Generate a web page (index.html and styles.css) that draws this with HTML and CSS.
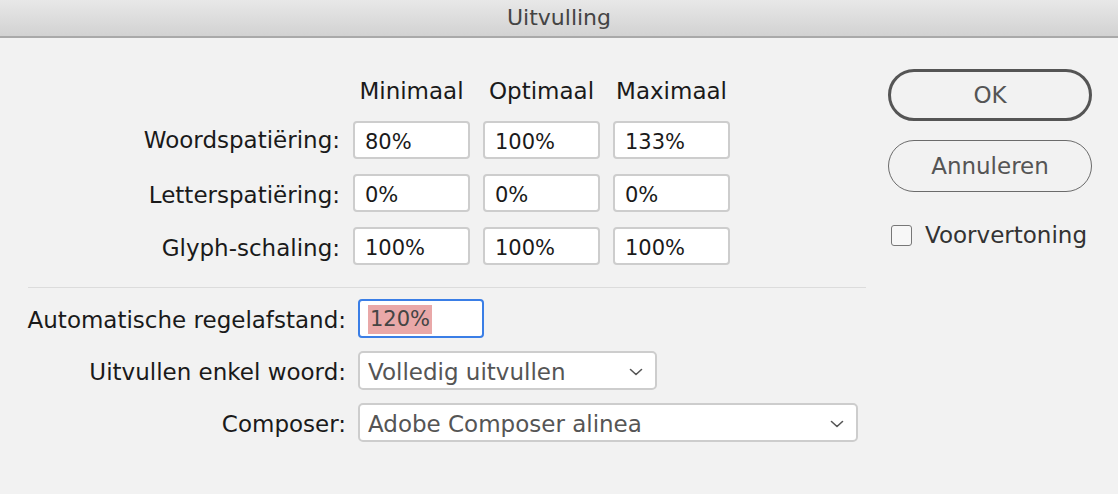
FILE: index.html
```html
<!DOCTYPE html>
<html lang="nl">
<head>
    <meta charset="UTF-8">
    <title>Uitvulling</title>
    <link rel="stylesheet" href="styles.css">
</head>
<body>
    <div class="titlebar">Uitvulling</div>

    <div class="window">
        <div class="form">
            <div class="spacing">
                <span></span>
                <span class="head">Minimaal</span>
                <span class="head">Optimaal</span>
                <span class="head">Maximaal</span>

                <label>Woordspatiëring:</label>
                <div class="field">80%</div>
                <div class="field">100%</div>
                <div class="field">133%</div>

                <label>Letterspatiëring:</label>
                <div class="field">0%</div>
                <div class="field">0%</div>
                <div class="field">0%</div>

                <label>Glyph-schaling:</label>
                <div class="field">100%</div>
                <div class="field">100%</div>
                <div class="field">100%</div>
            </div>

            <hr class="sep">

            <div class="options">
                <label>Automatische regelafstand:</label>
                <div class="field focus"><span class="selected">120%</span></div>

                <label>Uitvullen enkel woord:</label>
                <div class="select single">
                    <span>Volledig uitvullen</span>
                    <svg width="14" height="8" viewBox="0 0 14 8"><path d="M1.5 1.5 L7 6.5 L12.5 1.5" fill="none" stroke="#555" stroke-width="1.6" stroke-linecap="round" stroke-linejoin="round"/></svg>
                </div>

                <label>Composer:</label>
                <div class="select composer">
                    <span>Adobe Composer alinea</span>
                    <svg width="14" height="8" viewBox="0 0 14 8"><path d="M1.5 1.5 L7 6.5 L12.5 1.5" fill="none" stroke="#555" stroke-width="1.6" stroke-linecap="round" stroke-linejoin="round"/></svg>
                </div>
            </div>
        </div>

        <div class="actions">
            <button class="btn default">OK</button>
            <button class="btn">Annuleren</button>
            <div class="check">
                <span class="box"></span>
                <span>Voorvertoning</span>
            </div>
        </div>
    </div>
</body>
</html>
```

FILE: styles.css
```css
body {
    margin: 0;
    background: #f2f2f2;
    font-family: "DejaVu Sans", "Noto Sans", sans-serif;
    color: #1a1a1a;
    width: 1118px;
    height: 494px;
    overflow: hidden;
}
.titlebar {
    height: 36px;
    line-height: 36px;
    text-align: center;
    font-size: 22px;
    color: #444;
    background: linear-gradient(#e8e8e8, #d2d2d2);
    border-bottom: 2px solid #a9a9a9;
}
.window {
    display: flex;
}
.form {
    width: 866px;
    padding-top: 38px;
}
.spacing {
    display: grid;
    grid-template-columns: 340px repeat(3, 117px);
    column-gap: 13px;
    row-gap: 15px;
    align-items: center;
    font-size: 23px;
}
.head {
    text-align: center;
    line-height: 30px;
}
label {
    text-align: right;
    font-size: 23px;
    white-space: nowrap;
    padding-top: 3px;
}
.head + label, .spacing > span:first-child { padding-top: 0; }
.field {
    box-sizing: border-box;
    height: 38px;
    line-height: 38px;
    padding: 0 10px;
    background: #fff;
    border: 2px solid #cdcdcd;
    border-radius: 4px;
    font-size: 21px;
    color: #1a1a1a;
    overflow: hidden;
}
.sep {
    margin: 22px 0 11px 28px;
    border: none;
    border-top: 1px solid #dcdcdc;
}
.options {
    display: grid;
    grid-template-columns: 346px auto;
    column-gap: 12px;
    row-gap: 13px;
    align-items: center;
    justify-items: start;
}
.options label {
    justify-self: end;
}
.field.focus {
    width: 126px;
    height: 39px;
    line-height: 35px;
    border: 2px solid #3a7ee6;
    border-radius: 4px;
    padding: 0 0 0 8px;
    color: #444;
}
.selected {
    display: inline-block;
    background: #e9a8a8;
    line-height: 29px;
    padding: 0 2px;
    vertical-align: middle;
}
.select {
    box-sizing: border-box;
    height: 39px;
    display: flex;
    align-items: center;
    justify-content: space-between;
    padding: 2px 12px 0 8px;
    background: #fff;
    border: 2px solid #cdcdcd;
    border-radius: 5px;
    font-size: 23px;
    color: #555;
}
.select.single { width: 299px; }
.select.composer { width: 500px; }
.actions {
    margin-left: 22px;
    padding-top: 31px;
    width: 204px;
    display: flex;
    flex-direction: column;
}
.btn {
    box-sizing: border-box;
    height: 52px;
    border-radius: 26px;
    border: 1.5px solid #6b6b6b;
    background: #f2f2f2;
    font-family: inherit;
    font-size: 23px;
    color: #555;
    margin-bottom: 19px;
}
.btn.default {
    border: 3px solid #555;
}
.check {
    display: flex;
    align-items: center;
    gap: 13px;
    margin-left: 3px;
    margin-top: 11px;
    font-size: 23px;
    color: #333;
}
.box {
    width: 19px;
    height: 19px;
    border: 1.5px solid #777;
    border-radius: 3px;
    background: #f7f7f7;
}
```
